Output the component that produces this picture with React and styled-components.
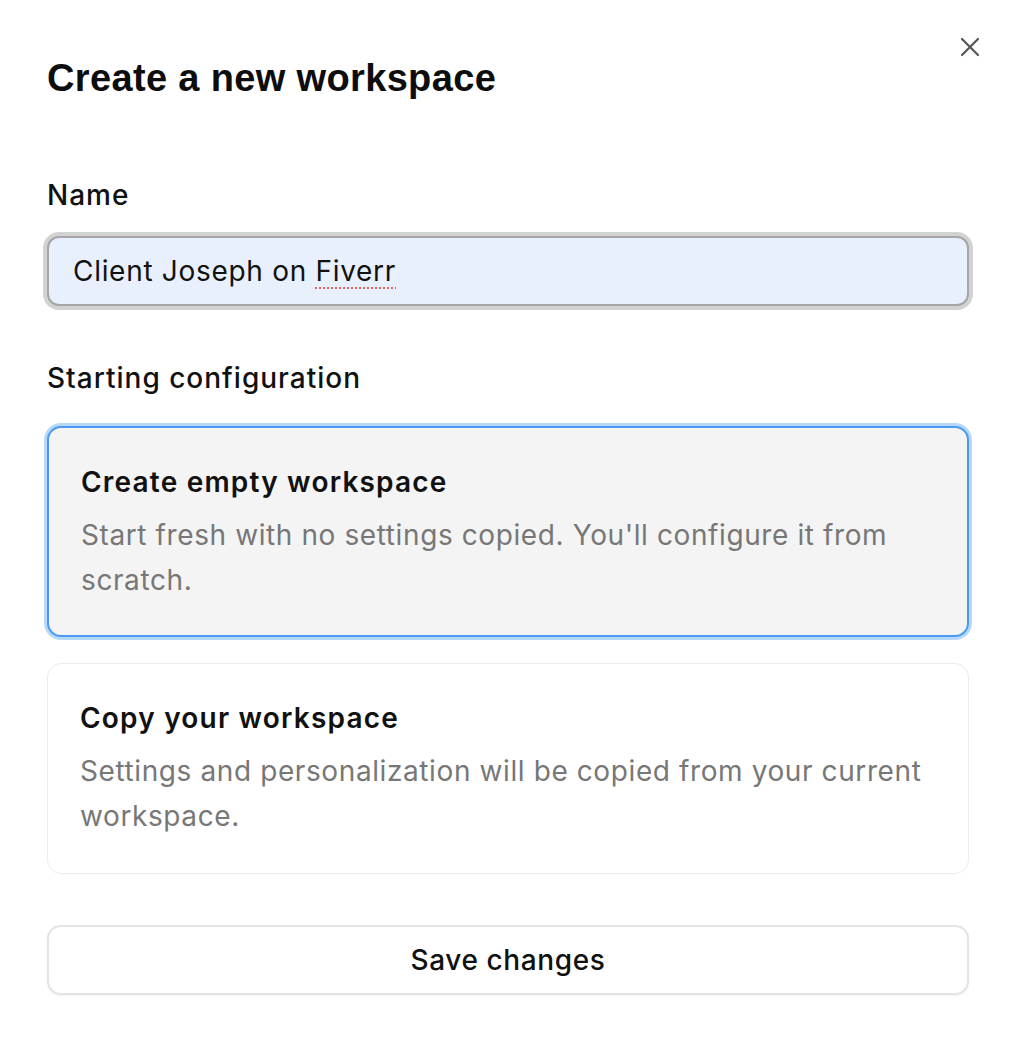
import React from 'react'
import styled, { createGlobalStyle } from 'styled-components'

const GlobalStyle = createGlobalStyle`
	html, body {
		margin: 0;
		padding: 0;
		background: #ffffff;
	}
	body {
		font-family: Inter, 'Noto Sans', sans-serif;
		color: #111111;
	}
`

function App() {
	return (
		<>
			<GlobalStyle />
			<StyledDialog>
				<StyledHeader>
					<StyledTitle>Create a new workspace</StyledTitle>
					<StyledClose aria-label="Close">
						<svg width="22" height="22" viewBox="0 0 22 22" fill="none">
							<path
								d="M3 3L19 19M19 3L3 19"
								stroke="#555"
								strokeWidth="2.2"
								strokeLinecap="round"
							/>
						</svg>
					</StyledClose>
				</StyledHeader>

				<StyledLabel>Name</StyledLabel>
				<StyledField role="textbox">
					Client Joseph on <StyledMisspelled>Fiverr</StyledMisspelled>
				</StyledField>

				<StyledLabel $top={56}>Starting configuration</StyledLabel>
				<StyledOptions>
					<StyledOption $selected>
						<StyledOptionTitle>Create empty workspace</StyledOptionTitle>
						<StyledOptionText>
							Start fresh with no settings copied. You'll configure it from
							scratch.
						</StyledOptionText>
					</StyledOption>
					<StyledOption>
						<StyledOptionTitle>Copy your workspace</StyledOptionTitle>
						<StyledOptionText>
							Settings and personalization will be copied from your current
							workspace.
						</StyledOptionText>
					</StyledOption>
				</StyledOptions>

				<StyledSave>Save changes</StyledSave>
			</StyledDialog>
		</>
	)
}

const StyledDialog = styled.div`
	width: 1016px;
	height: 1042px;
	box-sizing: border-box;
	padding: 36px 47px 0 47px;
	display: flex;
	flex-direction: column;
	background: #ffffff;
`
const StyledHeader = styled.div`
	display: flex;
	justify-content: space-between;
	align-items: flex-start;
	margin-bottom: 81px;
`
const StyledTitle = styled.h1`
	margin: 22px 0 0 0;
	font-family: 'Liberation Sans', Arial, sans-serif;
	font-size: 38px;
	line-height: 40px;
	font-weight: 700;
	letter-spacing: 0.35px;
	color: #0d0d0d;
`
const StyledClose = styled.button`
	width: 22px;
	height: 22px;
	margin: 0 -12px 0 0;
	padding: 0;
	border: none;
	background: none;
	display: flex;
	cursor: pointer;
`
const StyledLabel = styled.div`
	margin-top: ${(props) => props.$top || 0}px;
	font-size: 28px;
	line-height: 32px;
	font-weight: 500;
	letter-spacing: 1px;
	color: #111;
`
const StyledField = styled.div`
	margin-top: 25px;
	height: 70px;
	box-sizing: border-box;
	padding: 0 24px;
	display: flex;
	align-items: center;
	white-space: pre;
	background: #e8f0fe;
	border: 2px solid #a6a6a6;
	border-radius: 12px;
	box-shadow: 0 0 0 4px #d2d2d2;
	font-size: 28px;
	letter-spacing: 0.7px;
	color: #111;
`
const StyledMisspelled = styled.span`
	text-decoration: underline dotted #e8645c;
	text-decoration-thickness: 2px;
	text-underline-offset: 6px;
`
const StyledOptions = styled.div`
	margin-top: 32px;
	display: flex;
	flex-direction: column;
	gap: 26px;
`
const StyledOption = styled.div`
	height: 211px;
	box-sizing: border-box;
	padding: 38px 32px 0 32px;
	border-radius: 14px;
	background: ${(props) => (props.$selected ? '#f4f4f4' : '#ffffff')};
	border: ${(props) =>
		props.$selected ? '2px solid #4a9af5' : '1px solid #ececec'};
	box-shadow: ${(props) => (props.$selected ? '0 0 0 3px #b6d8fb' : 'none')};
`
const StyledOptionTitle = styled.div`
	font-size: 28px;
	line-height: 32px;
	font-weight: 600;
	letter-spacing: 1.2px;
	color: #111;
`
const StyledOptionText = styled.div`
	margin-top: 15px;
	font-size: 28px;
	line-height: 45px;
	letter-spacing: 0.6px;
	color: #777777;
`
const StyledSave = styled.button`
	margin-top: 51px;
	height: 70px;
	width: 100%;
	background: #ffffff;
	border: 2px solid #e4e4e4;
	border-radius: 14px;
	box-shadow: 0 1px 3px rgba(0, 0, 0, 0.06);
	font-family: Inter, 'Noto Sans', sans-serif;
	font-size: 28px;
	font-weight: 500;
	letter-spacing: 0.6px;
	color: #111;
	cursor: pointer;
`

export default App
